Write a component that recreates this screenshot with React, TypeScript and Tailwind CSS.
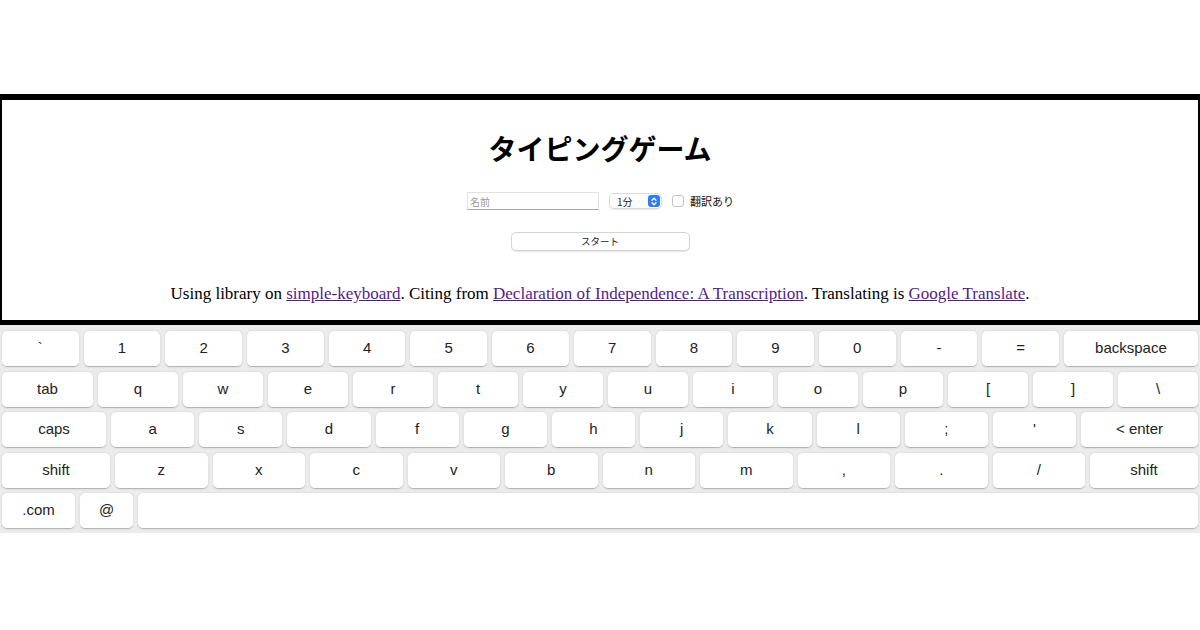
import React from 'react';

const rows: { label: string; w?: string }[][] = [
  [
    { label: '`' }, { label: '1' }, { label: '2' }, { label: '3' }, { label: '4' }, { label: '5' },
    { label: '6' }, { label: '7' }, { label: '8' }, { label: '9' }, { label: '0' }, { label: '-' },
    { label: '=' }, { label: 'backspace', w: 'w-[134px]' },
  ],
  [
    { label: 'tab', w: 'w-[91px]' }, { label: 'q' }, { label: 'w' }, { label: 'e' }, { label: 'r' },
    { label: 't' }, { label: 'y' }, { label: 'u' }, { label: 'i' }, { label: 'o' }, { label: 'p' },
    { label: '[' }, { label: ']' }, { label: '\\' },
  ],
  [
    { label: 'caps', w: 'w-[104px]' }, { label: 'a' }, { label: 's' }, { label: 'd' }, { label: 'f' },
    { label: 'g' }, { label: 'h' }, { label: 'j' }, { label: 'k' }, { label: 'l' }, { label: ';' },
    { label: "'" }, { label: '< enter', w: 'w-[117px]' },
  ],
  [
    { label: 'shift', w: 'w-[108px]' }, { label: 'z' }, { label: 'x' }, { label: 'c' }, { label: 'v' },
    { label: 'b' }, { label: 'n' }, { label: 'm' }, { label: ',' }, { label: '.' }, { label: '/' },
    { label: 'shift', w: 'w-[108px]' },
  ],
  [
    { label: '.com', w: 'w-[73px]' }, { label: '@', w: 'w-[53px]' }, { label: ' ' },
  ],
];

const Key: React.FC<{ label: string; w?: string }> = ({ label, w }) => (
  <div
    className={`${w ? `${w} shrink-0` : 'flex-1 min-w-0'} h-[36px] flex items-center justify-center bg-white rounded-[5px] border-b border-[#b5b5b5] shadow-[0_0_3px_-1px_rgba(0,0,0,0.3)] text-[15px] text-[#222] whitespace-pre`}
  >
    {label}
  </div>
);

export default function App() {
  return (
    <div className="w-[1200px] h-[630px] bg-white overflow-hidden pt-[94px]">
      {/* game panel */}
      <section className="h-[231px] border-t-[6px] border-b-[5px] border-x-2 border-black flex flex-col items-center">
        <h1
          className="mt-[27px] h-[42px] leading-[42px] text-[28px] font-bold text-black"
          style={{ fontFamily: '"Noto Sans CJK JP", serif' }}
        >
          タイピングゲーム
        </h1>

        <div
          className="mt-[23px] h-[18px] flex items-center text-[10px]"
          style={{ fontFamily: '"Noto Sans CJK JP", sans-serif' }}
        >
          <input
            placeholder="名前"
            className="ml-[1px] w-[132px] h-[18px] px-[2px] border border-[#e2e2e2] border-b-[#a8a8a8] outline-none text-[10px] placeholder:text-[#9a9a9a]"
          />
          <div className="ml-[10px] w-[53px] h-[16px] rounded-[5px] border border-[#d9d9d9] shadow-[0_1px_1px_rgba(0,0,0,0.08)] flex items-center justify-between pl-[7px] pr-[1px] text-[#222]">
            <span>1分</span>
            <span className="w-[12px] h-[12px] rounded-[3px] bg-[#2f7cf6] flex items-center justify-center">
              <svg width="6" height="9" viewBox="0 0 6 9" fill="none" stroke="white" strokeWidth="1.3" strokeLinecap="round" strokeLinejoin="round">
                <path d="M1 3.2 3 1.2 5 3.2" />
                <path d="M1 5.8 3 7.8 5 5.8" />
              </svg>
            </span>
          </div>
          <span className="ml-[10px] w-[12px] h-[12px] rounded-[3px] border border-[#c4c4c4] bg-white" />
          <span className="ml-[6px] text-[11px] text-[#111]">翻訳あり</span>
        </div>

        <button
          className="mt-[22px] w-[179px] h-[19px] rounded-[5px] border border-[#d4d4d4] bg-white shadow-[0_1px_1px_rgba(0,0,0,0.1)] text-[9.5px] text-[#222] flex items-center justify-center"
          style={{ fontFamily: '"Noto Sans CJK JP", sans-serif' }}
        >
          スタート
        </button>

        <p
          className="mt-[31px] h-[24px] leading-[24px] text-[17px] text-black"
          style={{ fontFamily: '"Liberation Serif", serif' }}
        >
          Using library on <a className="underline text-[#551a8b]">simple-keyboard</a>. Citing from{' '}
          <a className="underline text-[#551a8b]">Declaration of Independence: A Transcription</a>. Translating is{' '}
          <a className="underline text-[#551a8b]">Google Translate</a>.
        </p>
      </section>

      {/* keyboard */}
      <div
        className="bg-[#ececec] pt-[6px] pb-[4px] px-[2px] flex flex-col gap-[4.5px]"
        style={{ fontFamily: '"Liberation Sans", Arial, sans-serif' }}
      >
        {rows.map((row, i) => (
          <div key={i} className="flex gap-[5px]">
            {row.map((k, j) => (
              <Key key={j} label={k.label} w={k.w} />
            ))}
          </div>
        ))}
      </div>
    </div>
  );
}
